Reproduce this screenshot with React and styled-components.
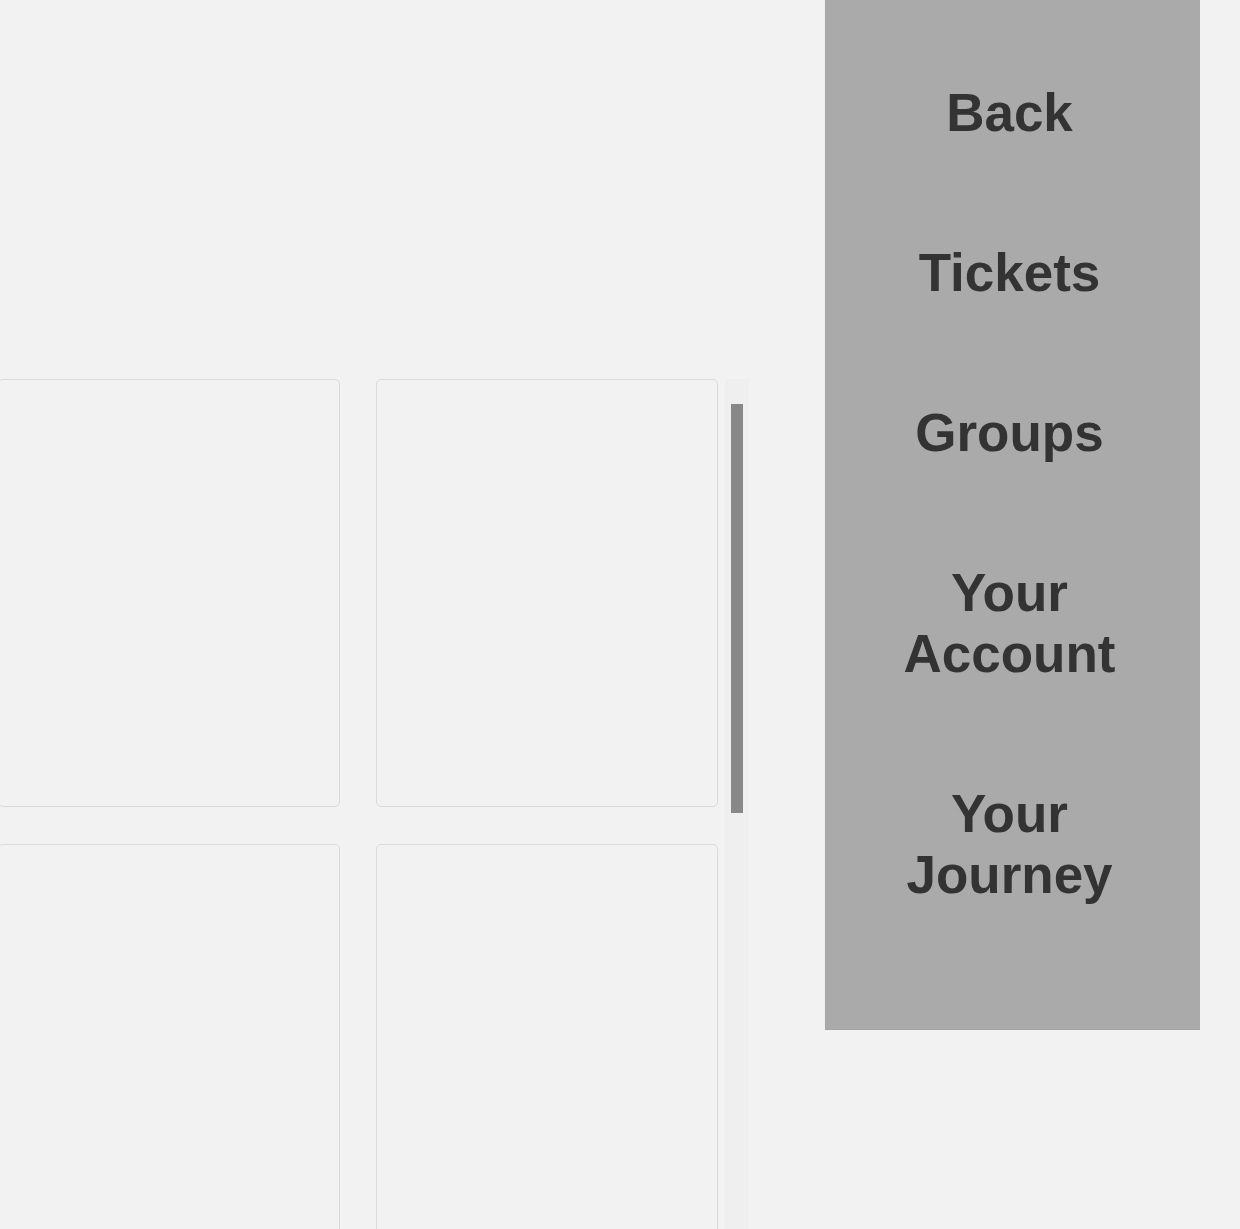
import React from "react";
import styled, { createGlobalStyle } from "styled-components";

const Global = createGlobalStyle`
  html, body {
    margin: 0;
    padding: 0;
    height: 1229px;
    overflow: hidden;
    background: #f2f2f2;
    font-family: "Liberation Sans", Arial, sans-serif;
  }
  * { box-sizing: border-box; }
`;

const Page = styled.div`
  display: flex;
  align-items: flex-start;
  width: 1240px;
  height: 1229px;
  overflow: hidden;
`;

const Main = styled.main`
  flex: none;
  width: 751px;
  margin-left: -2px;
  padding-top: 379px;
`;

const ScrollArea = styled.div`
  display: flex;
  align-items: stretch;
  height: 900px;
`;

const CardGrid = styled.div`
  display: grid;
  grid-template-columns: repeat(2, 342px);
  grid-auto-rows: 428px;
  column-gap: 36px;
  row-gap: 37px;
  padding-right: 7px;
`;

const Card = styled.div`
  background: #f2f2f2;
  border: 1px solid #dadada;
  border-radius: 5px;
`;

const Track = styled.div`
  width: 24px;
  background: #efefef;
  padding-top: 25px;
  padding-left: 6px;
`;

const Thumb = styled.div`
  width: 12px;
  height: 409px;
  background: #888888;
`;

const Sidebar = styled.nav`
  flex: none;
  width: 375px;
  height: 1030px;
  margin-left: 76px;
  background: #aaaaaa;
  border-left: 1px solid #a6a6a6;
  border-bottom: 1px solid #a4a4a4;
  padding: 32px 0 76px;
  display: flex;
  flex-direction: column;
`;

const NavItem = styled.a`
  display: block;
  padding: 49.5px 0;
  text-align: center;
  font-family: "Liberation Sans", Arial, sans-serif;
  font-weight: 700;
  font-size: 53px;
  line-height: 61px;
  color: #333333;
  text-decoration: none;
  margin-right: 7px;
`;

export default function App() {
  const items = ["Back", "Tickets", "Groups", ["Your", "Account"], ["Your", "Journey"]];
  return (
    <>
      <Global />
      <Page>
        <Main>
          <ScrollArea>
            <CardGrid>
              <Card />
              <Card />
              <Card />
              <Card />
            </CardGrid>
            <Track>
              <Thumb />
            </Track>
          </ScrollArea>
        </Main>
        <Sidebar>
          {items.map((it, i) => (
            <NavItem key={i} href="#">
              {Array.isArray(it) ? (
                <>
                  {it[0]}
                  <br />
                  {it[1]}
                </>
              ) : (
                it
              )}
            </NavItem>
          ))}
        </Sidebar>
      </Page>
    </>
  );
}
